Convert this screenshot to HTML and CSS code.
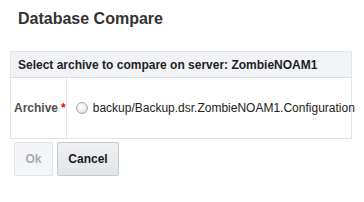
FILE: index.html
```html
<!DOCTYPE html>
<html>
<head>
<meta charset="utf-8">
<link rel="stylesheet" href="styles.css">
</head>
<body>
<h1 class="title">Database Compare</h1>
<div class="panel">
  <div class="panel-head">Select archive to compare on server: ZombieNOAM1</div>
  <div class="panel-row">
    <div class="label-cell"><span class="label">Archive</span><span class="req">*</span></div>
    <div class="value-cell">
      <span class="radio"></span>
      <span class="value">backup/Backup.dsr.ZombieNOAM1.Configuration</span>
    </div>
  </div>
</div>
<div class="actions">
  <button class="btn btn-disabled">Ok</button>
  <button class="btn">Cancel</button>
</div>
</body>
</html>
```
FILE: styles.css
```css
html, body {
  margin: 0;
  padding: 0;
  background: #ffffff;
  overflow: hidden;
}
body {
  font-family: "Liberation Sans", Arial, sans-serif;
  width: 364px;
  height: 202px;
}
.title {
  margin: 0;
  padding: 10px 0 0 18px;
  font-size: 16px;
  line-height: 18px;
  font-weight: bold;
  color: #333333;
}
.panel {
  margin: 23px 0 0 10px;
  width: 340px;
  border: 1px solid #dfe4e9;
  border-top-color: #dde3e9;
}
.panel-head {
  height: 26px;
  box-sizing: border-box;
  background: #f1f3f6;
  border-bottom: 1px solid #d8dee4;
  padding-left: 7px;
  display: flex;
  align-items: center;
  font-size: 12px;
  font-weight: bold;
  color: #222222;
  white-space: nowrap;
}
.panel-row {
  display: flex;
  height: 60px;
}
.label-cell {
  width: 57px;
  border-right: 1px solid #e8e8e8;
  display: flex;
  align-items: center;
  padding-left: 3px;
  box-sizing: border-box;
  font-size: 12px;
  white-space: nowrap;
}
.label {
  font-weight: bold;
  color: #4f4f4f;
}
.req {
  color: #e01010;
  font-weight: bold;
  margin-left: 3px;
}
.value-cell {
  display: flex;
  align-items: center;
  padding-left: 9px;
  white-space: nowrap;
  font-size: 12px;
  color: #222222;
}
.radio {
  width: 10px;
  height: 10px;
  border-radius: 50%;
  border: 1px solid #a8a8a8;
  background: radial-gradient(circle at 45% 40%, #ffffff 0%, #ececec 55%, #cfcfcf 100%);
  margin-right: 5px;
  flex: none;
}
.actions {
  display: flex;
  gap: 4px;
  margin: 3px 0 0 14px;
}
.btn {
  height: 34px;
  box-sizing: border-box;
  padding: 0 9px;
  font-family: "Liberation Sans", Arial, sans-serif;
  font-size: 12px;
  font-weight: bold;
  color: #1a1a1a;
  background: linear-gradient(#eef0f2, #e2e5e8);
  border: 1px solid #c3cbd1;
  border-radius: 2px;
}
.btn:first-child {
  width: 39px;
}
.btn:last-child {
  width: 62px;
}
.btn-disabled {
  color: #a9adb1;
  background: #f4f5f7;
  border-color: #e0e4e7;
}
```
